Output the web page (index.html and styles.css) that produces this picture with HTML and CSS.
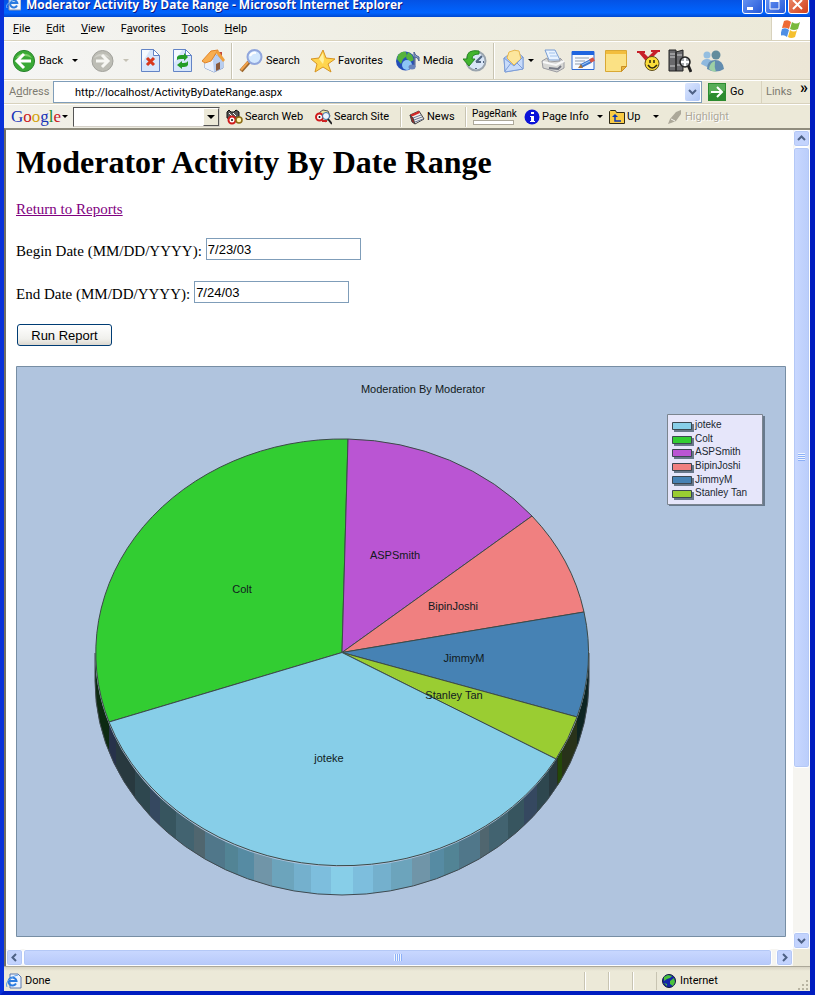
FILE: index.html
```html
<!DOCTYPE html>
<html lang="en">
<head>
<meta charset="utf-8">
<title>Moderator Activity By Date Range - Microsoft Internet Explorer</title>
<link rel="stylesheet" href="styles.css">
</head>
<body>
<div class="window">
  <header class="titlebar">
    <svg class="title-icon" width="15" height="15" viewBox="0 0 15 15"><path d="M3 0h9l3 3v11H3z" fill="#f4f7fc" stroke="#8a96b0"/><path d="M11 9.5A3.6 3.6 0 1 1 11.3 7H4.5" fill="none" stroke="#2b7be0" stroke-width="2"/><path d="M1 12Q-1 9 5 5t8-3" fill="none" stroke="#7ab4f5"/></svg>
    <span class="title-text">Moderator Activity By Date Range - Microsoft Internet Explorer</span>
    <button class="win-btn" aria-label="Minimize"><svg width="17" height="18" viewBox="0 0 17 18"><path d="M4 12h6v3H4z" fill="#fff"/></svg></button>
    <button class="win-btn" aria-label="Maximize"><svg width="17" height="18" viewBox="0 0 17 18"><path d="M4 5h9v9H4z" fill="none" stroke="#fff"/><path d="M4 6h9" stroke="#fff" stroke-width="2"/></svg></button>
    <button class="win-btn win-close" aria-label="Close"><svg width="17" height="18" viewBox="0 0 17 18"><path d="M4 5l9 9M13 5l-9 9" stroke="#fff" stroke-width="2"/></svg></button>
  </header>

  <nav class="menubar">
    <button><u>F</u>ile</button><button><u>E</u>dit</button><button><u>V</u>iew</button><button>F<u>a</u>vorites</button><button><u>T</u>ools</button><button><u>H</u>elp</button>
    <div class="throbber"><svg width="20" height="18" viewBox="0 0 20 18"><path d="M3 1q4-2 7 1L8 9Q5 7 1 8z" fill="#ee6a35"/><path d="M11 2q4 3 8 0l-2 7q-4 2-8 0z" fill="#79b93c"/><path d="M1 9q4-2 7 1l-2 7Q3 14-1 16z" fill="#4f8fe6"/><path d="M9 10q4 3 7 0l-2 7q-4 2-7 0z" fill="#f5c02e"/></svg></div>
  </nav>

  <div class="toolbar">
    <button class="tool"><svg width="24" height="24" viewBox="0 0 24 24"><circle cx="12" cy="12" r="10.6" fill="#39a935" stroke="#2b8430"/><path d="M4 9a9 8 0 0 1 16 0q-8-4-16 0z" fill="#7fd06d"/><path d="M12 5l-7 7 7 7M6 12h13" fill="none" stroke="#fff" stroke-width="3"/></svg>Back</button>
    <button class="drop" aria-label="Back history"></button>
    <button class="tool" aria-label="Forward"><svg width="24" height="24" viewBox="0 0 24 24"><circle cx="12.500" cy="12" r="10.500" fill="#bdbdb5" stroke="#a2a29c"/><path d="M4 9a9 8 0 0 1 16 0q-8-4-16 0z" fill="#d0d0c9"/><path d="M12 6l6 6-6 6M6 12h12" fill="none" stroke="#f7f7f3" stroke-width="3"/></svg></button>
    <button class="drop drop-off" aria-label="Forward history"></button>
    <button class="tool" aria-label="Stop"><svg width="24" height="24" viewBox="0 0 24 24"><path d="M2.500.5h12l6 6v16h-18z" fill="#d7e6fb" stroke="#6384c6"/><path d="M3 1h8L3 14z" fill="#f5f9ff"/><path d="M14.500.5v6h6z" fill="#fff" stroke="#6384c6"/><path d="M8 9l7 7M15 9l-7 7" stroke="#d8371b" stroke-width="3"/></svg></button>
    <button class="tool" aria-label="Refresh"><svg width="24" height="24" viewBox="0 0 24 24"><path d="M2.500.5h12l6 6v16h-18z" fill="#d7e6fb" stroke="#6384c6"/><path d="M3 1h8L3 14z" fill="#f5f9ff"/><path d="M14.500.5v6h6z" fill="#fff" stroke="#6384c6"/><path d="M6 11V8q1-2 4-2h3V4l4 4-4 4v-2h-3q-3 0-4 1z" fill="#249c27"/><path d="M17 12v4q-1 2-4 2h-2v2l-5-4 5-4v2h2q3 0 4-2z" fill="#249c27"/></svg></button>
    <button class="tool" aria-label="Home"><svg width="24" height="24" viewBox="0 0 24 24"><path d="M16 3h4v6l-4-3z" fill="#c0493e"/><path d="M3 12v7l9 4 9-4v-8l-8-6z" fill="#b9ceef" stroke="#7893c6"/><path d="M3 12v7l9 4V11z" fill="#eaf1fc"/><path d="M11 12l4-6 7 7-1 6-9 4z" fill="#b9ceef"/><path d="M0 12L9 2l7-1-7 11-3 1-3 1z" fill="#f8ae50" stroke="#e18428"/><path d="M16 1l7 10-2 2-7-9z" fill="#f0a03c"/><path d="M14 15l4-2v7l-4 2z" fill="#8b5b3c"/></svg></button>
    <span class="sep"></span>
    <button class="tool"><svg width="24" height="24" viewBox="0 0 24 24"><path d="M10 13l-8 9" stroke="#9a662e" stroke-width="4"/><path d="M9 13l-7 8" stroke="#f2a14a" stroke-width="2"/><circle cx="15.500" cy="8" r="7" fill="#d3e8fe" stroke="#91a6dc" stroke-width="2"/><path d="M11 7q2-4 6-3" fill="none" stroke="#fff" stroke-width="2"/></svg>Search</button>
    <button class="tool"><svg width="24" height="24" viewBox="0 0 24 24"><path d="M12 1l3 8 9 1-7 5 3 8-8-5-8 5 2-8-6-5 8-1z" fill="#ffd54d" stroke="#d79422"/><path d="M12 4l1 7-1 4-4-5z" fill="#fff1a0"/></svg>Favorites</button>
    <button class="tool"><svg width="24" height="24" viewBox="0 0 24 24"><circle cx="9.500" cy="12" r="9.500" fill="#234db9"/><path d="M2 6q4-5 8-3l1 4-4 3-2 5-4-5zM12 3l4 3 2 5-4 2-4-4z" fill="#55b33c"/><circle cx="11" cy="16" r="5" fill="#8cc4f5"/><path d="M18 18V3q1 4 5 5v4q-1-4-4-4v10" fill="#8ba0d0" stroke="#4a5f8f"/><ellipse cx="16" cy="18" rx="3.500" ry="2.500" fill="#6783bd"/></svg>Media</button>
    <button class="tool" aria-label="History"><svg width="24" height="24" viewBox="0 0 24 24"><circle cx="13" cy="12" r="9.500" fill="#d9e6f7" stroke="#9aa4ad" stroke-width="2"/><path d="M13 13l6-6M13 13h5M13 4v1M13 19v1M20 13h1" stroke="#536783" stroke-width="2"/><path d="M16 2Q3 0 4 10H0l6 7 6-7H9q0-5 7-5z" fill="#42b52e" stroke="#268522"/></svg></button>
    <span class="sep"></span>
    <button class="tool" aria-label="Mail"><svg width="24" height="24" viewBox="0 0 24 24"><path d="M2 9L13 1l8 7v12L3 23z" fill="#a9c4f3" stroke="#7d9dd7"/><path d="M5 9l2-6q6-3 10-1l2 8-7 6z" fill="#fce69d" stroke="#e9b94f"/><path d="M2 9l10 8 9-9v12L3 23z" fill="#c8dbfa" stroke="#7d9dd7"/><path d="M3 22l6-8M21 20l-6-6" stroke="#7d9dd7"/></svg></button>
    <button class="drop" aria-label="Mail options"></button>
    <button class="tool" aria-label="Print"><svg width="24" height="24" viewBox="0 0 24 24"><path d="M4 1h10l5 10H8z" fill="#e9f3ff" stroke="#789cd2"/><path d="M8 4h6M9 7h7" stroke="#a3c3ec"/><path d="M1 12l5-3 2 4 11-1v-3l4 4v6l-7 4-14-4z" fill="#d7d7d5" stroke="#9a9ba1"/><path d="M2 13l13 3 8-4" fill="none" stroke="#f8f8f8" stroke-width="2"/><path d="M8 19l9 1 3-3" fill="none" stroke="#747884" stroke-width="2"/></svg></button>
    <button class="tool" aria-label="Edit"><svg width="24" height="24" viewBox="0 0 24 24"><path d="M1 2.500h22v18H1z" fill="#f6faff" stroke="#2e6bd5"/><path d="M1 2h22v4H1z" fill="#1e65e0"/><path d="M4 9h14M4 12h10M4 15h6" stroke="#8d9bad"/><path d="M10 17L20 12" stroke="#3b78cf" stroke-width="4"/><path d="M11 16L19 12" stroke="#a9ccf7"/><path d="M19 12l4-2" stroke="#d45445" stroke-width="4"/><path d="M7 19l3-4 2 4z" fill="#a8733d"/></svg></button>
    <button class="tool" aria-label="Note"><svg width="24" height="24" viewBox="0 0 24 24"><path d="M.5 1.500h21v16l-5 5H.5z" fill="#fbe184" stroke="#d9a834"/><path d="M1 2h20v3H1z" fill="#f2bd3d"/><path d="M16.500 22.500v-5h5z" fill="#eab63d" stroke="#c98f26"/></svg></button>
    <button class="tool" aria-label="Messenger"><svg width="24" height="24" viewBox="0 0 24 24"><path d="M1 2h8v2H8l4 4 5-5h-2V1h9v2h-2l-8 8v6H9v-6L3 4H1z" fill="#c71f28"/><circle cx="16" cy="14.500" r="7" fill="#f9dc3a" stroke="#5c4b18"/><path d="M14 11v3M18 11v3M12 16q4 6 9 0" fill="none" stroke="#2b250f" stroke-width="1.500"/></svg></button>
    <button class="tool" aria-label="Research"><svg width="24" height="24" viewBox="0 0 24 24"><path d="M1 1h7v21H1zM8 3l7-2v21H8z" fill="#69696c" stroke="#222"/><path d="M2 5h5M2 8h5M2 17h5M9 6h5M9 16h5" stroke="#d0d0d0"/><path d="M20 16l3 7" stroke="#222" stroke-width="3"/><circle cx="17" cy="13" r="5" fill="#a9adb0" stroke="#222" stroke-width="1.500"/><path d="M17 9v8M13 13h8" stroke="#fff" stroke-width="2"/></svg></button>
    <button class="tool" aria-label="Contacts"><svg width="24" height="24" viewBox="0 0 24 24"><circle cx="7" cy="6" r="3.500" fill="#94bee0"/><path d="M1 15q1-5 6-5t5 5l-5 3z" fill="#8eb8de"/><circle cx="16" cy="6" r="4.500" fill="#638d9d"/><path d="M7 20q0-9 8-9t9 9q-8 5-17 0z" fill="#628caf"/><path d="M9 20q1-7 6-8-1 6 1 11-4 0-7-3z" fill="#9ed0a5"/></svg></button>
  </div>

  <div class="addressbar">
    <label for="address">A<u>d</u>dress</label>
    <div class="address-box">
      <input id="address" type="text" value="http://localhost/ActivityByDateRange.aspx">
      <button class="xp-arrow" aria-label="Show addresses"><svg width="9" height="7" viewBox="0 0 9 7"><path d="M1 1l3.500 3.500L8 1" fill="none" stroke="#4d6185" stroke-width="2"/></svg></button>
    </div>
    <button class="go"><svg width="18" height="18" viewBox="0 0 18 18"><path d="M0 0h18v18H0z" fill="#2c8b2f"/><path d="M1 1h16v7Q8 6 1 12z" fill="#58ad57"/><path d="M9 4l5 5-5 5M3 9h11" fill="none" stroke="#fff" stroke-width="2"/></svg>Go</button>
    <div class="links">Links<span>»</span></div>
  </div>

  <div class="googlebar">
    <a class="google" href="#"><span class="g-blue">G</span><span class="g-red">o</span><span class="g-gold">o</span><span class="g-blue">g</span><span class="g-green">l</span><span class="g-red">e</span></a>
    <button class="drop" aria-label="Google menu"></button>
    <div class="google-box"><input type="text" aria-label="Google search"><button class="drop classic" aria-label="Search history"></button></div>
    <button class="tool"><svg width="17" height="16" viewBox="0 0 17 16"><path d="M1 3l2-2 2 2h3l2-2 3 2v7l-6 1-6-2z" fill="#555" stroke="#111"/><path d="M3 4l3 3M7 4l3 3" stroke="#fff"/><circle cx="6" cy="11" r="3.500" fill="#fff" stroke="#d01c1c" stroke-width="2"/><circle cx="13" cy="11" r="3" fill="#fff3b0" stroke="#8b6d15" stroke-width="1.500"/><circle cx="6" cy="11" r="1" fill="#111"/></svg>Search Web</button>
    <button class="tool"><svg width="17" height="16" viewBox="0 0 17 16"><path d="M5 3l3-2 5 1 2 5-4 6-7-4z" fill="#e9e19b" stroke="#555"/><circle cx="4.500" cy="8" r="3.500" fill="#fff" stroke="#d01c1c" stroke-width="2"/><circle cx="4.500" cy="8" r="1" fill="#111"/><circle cx="11" cy="7" r="3.500" fill="#eef6ff" stroke="#3a70a8"/><path d="M13 10l4 5" stroke="#222" stroke-width="2"/><path d="M7 12h5" stroke="#c22" stroke-width="2"/></svg>Search Site</button>
    <span class="sep"></span>
    <button class="tool"><svg width="16" height="16" viewBox="0 0 16 16"><path d="M1 6l9-4 5 8-9 5z" fill="#f4f1e9" stroke="#444"/><path d="M1 6l9-4 1 2-9 4z" fill="#d32828"/><path d="M4 9l8-3M5 11l8-3M6 13l8-3" stroke="#69799b"/><path d="M1 6l2 7 3 2-2-6z" fill="#a22" stroke="#444"/></svg>News</button>
    <span class="sep"></span>
    <div class="pagerank"><span>PageRank</span><i></i></div>
    <button class="tool"><svg width="16" height="16" viewBox="0 0 16 16"><circle cx="8" cy="8" r="7.500" fill="#0b12d8"/><path d="M7 3h3v2H7zM6 7h4v5h1v1H6v-1h1V8H6z" fill="#fff"/></svg>Page Info</button>
    <button class="drop" aria-label="Page info menu"></button>
    <button class="tool"><svg width="16" height="16" viewBox="0 0 16 16"><path d="M.5 14.500v-12l1-1h5l1 2h8v11z" fill="#f9cb45" stroke="#2e2a18"/><path d="M12 12H6V7" fill="none" stroke="#0b36b0" stroke-width="1.500"/><path d="M3 8l3-3 3 3z" fill="#0b36b0"/></svg>Up</button>
    <button class="drop" aria-label="Up menu"></button>
    <button class="tool disabled" disabled><svg width="16" height="16" viewBox="0 0 16 16"><path d="M1 15l2-5 6-7 5-2v4l-5 7-5 2z" fill="#aca899"/><path d="M4 10l4 2" stroke="#f7f5ec"/></svg>Highlight</button>
  </div>

  <main class="viewport">
    <div class="page">
      <h1>Moderator Activity By Date Range</h1>
      <a class="return" href="#">Return to Reports</a>
      <form class="report-form">
        <div class="field"><label for="begin">Begin Date (MM/DD/YYYY):</label><input id="begin" type="text" value="7/23/03"></div>
        <div class="field"><label for="end">End Date (MM/DD/YYYY):</label><input id="end" type="text" value="7/24/03"></div>
        <button class="run" type="button">Run Report</button>
      </form>
      <svg class="chart" viewBox="0 0 770 571" role="img" aria-label="Moderation By Moderator">
        <defs><clipPath id="side"><path d="M79 287A247 214 0 0 0 573 287V315A247 214 0 0 1 79 315Z"/></clipPath></defs>
        <path d="M.5.5h769v570H.5z" fill="#b0c4de" stroke="#778ea4"/>
        <g clip-path="url(#side)">
          <path d="M79 280h14v260H79z" fill="#0d2a12"/>
          <path d="M93 280h7v260h-7z" fill="#27324a"/><path d="M100 280h19v260h-19z" fill="#28393f"/>
          <path d="M119 280h15v260h-15z" fill="#2e474f"/><path d="M134 280h10v260h-10z" fill="#354860"/>
          <path d="M144 280h16v260h-16z" fill="#37555f"/><path d="M160 280h18v260h-18z" fill="#426370"/>
          <path d="M178 280h11v260h-11z" fill="#50666f"/><path d="M189 280h20v260h-20z" fill="#50778a"/>
          <path d="M209 280h13v260h-13z" fill="#528495"/><path d="M222 280h16v260h-16z" fill="#568ba3"/>
          <path d="M238 280h18v260h-18z" fill="#7095a8"/><path d="M256 280h22v260h-22z" fill="#6ca4bc"/>
          <path d="M278 280h17v260h-17z" fill="#74b0cd"/><path d="M295 280h20v260h-20z" fill="#7dbedd"/>
          <path d="M315 280h22v260h-22z" fill="#87cee8"/><path d="M337 280h20v260h-20z" fill="#7dbedd"/>
          <path d="M357 280h18v260h-18z" fill="#74b0cd"/><path d="M375 280h21v260h-21z" fill="#6ca4bc"/>
          <path d="M396 280h18v260h-18z" fill="#7095a8"/><path d="M414 280h14v260h-14z" fill="#568ba3"/>
          <path d="M428 280h15v260h-15z" fill="#528495"/><path d="M443 280h21v260h-21z" fill="#50778a"/>
          <path d="M464 280h9v260h-9z" fill="#50666f"/><path d="M473 280h19v260h-19z" fill="#426370"/>
          <path d="M492 280h16v260h-16z" fill="#37555f"/><path d="M508 280h13v260h-13z" fill="#354860"/>
          <path d="M521 280h12v260h-12z" fill="#2e474f"/><path d="M533 280h8v260h-8z" fill="#28393f"/>
          <path d="M541 280h20v260h-20z" fill="#28321a"/><path d="M542 280h4v260h-4z" fill="#244808"/>
          <path d="M561 280h12v260h-12z" fill="#0d2422"/>
        </g>
        <path d="M79 287V315A247 214 0 0 0 573 315V287" fill="none" stroke="#404a50"/>
        <g stroke="#3c4a48" stroke-linejoin="round">
          <path d="M326 286.500L93 356A247 214 0 0 1 332 73Z" fill="#32cd32"/>
          <path d="M326 286.500L332 73A247 214 0 0 1 516 150Z" fill="#ba55d3"/>
          <path d="M326 286.500L516 150A247 214 0 0 1 568 246Z" fill="#f08080"/>
          <path d="M326 286.500L568 246A247 214 0 0 1 561 351Z" fill="#4682b4"/>
          <path d="M326 286.500L561 351A247 214 0 0 1 540 393Z" fill="#9acd32"/>
          <path d="M326 286.500L540 393A247 214 0 0 1 93 356Z" fill="#87cee8"/>
        </g>
        <g class="chart-text" text-anchor="middle">
          <text x="407" y="27">Moderation By Moderator</text>
          <text x="226" y="227">Colt</text><text x="379" y="193">ASPSmith</text>
          <text x="437" y="244">BipinJoshi</text><text x="448" y="296">JimmyM</text>
          <text x="438" y="333">Stanley Tan</text><text x="313" y="396">joteke</text>
        </g>
        <path d="M653 50h96v90h-96z" fill="#68798c"/>
        <path d="M651.500 48.500h95v90h-95z" fill="#e6e6fa" stroke="#7b858f"/>
        <g fill="#68788a"><path d="M658 58h20v8h-20zM658 72h20v8h-20zM658 85h20v8h-20zM658 99h20v8h-20zM658 112h20v8h-20zM658 126h20v8h-20z"/></g>
        <g stroke="#3b4750">
          <path d="M656.500 56.500h19v7h-19z" fill="#87cee8"/><path d="M656.500 70.500h19v7h-19z" fill="#32cd32"/>
          <path d="M656.500 83.500h19v7h-19z" fill="#ba55d3"/><path d="M656.500 97.500h19v7h-19z" fill="#f08080"/>
          <path d="M656.500 110.500h19v7h-19z" fill="#4682b4"/><path d="M656.500 124.500h19v7h-19z" fill="#9acd32"/>
        </g>
        <g class="legend-text">
          <text x="679" y="62">joteke</text><text x="679" y="76">Colt</text><text x="679" y="89">ASPSmith</text>
          <text x="679" y="103">BipinJoshi</text><text x="679" y="117">JimmyM</text><text x="679" y="130">Stanley Tan</text>
        </g>
      </svg>
    </div>
    <div class="scroll scroll-v">
      <button aria-label="Scroll up"><svg width="9" height="9" viewBox="0 0 9 9"><path d="M1 6l3.500-3.500L8 6" fill="none" stroke="#4d6185" stroke-width="2"/></svg></button>
      <div class="thumb"><i></i></div><div class="track"></div>
      <button aria-label="Scroll down"><svg width="9" height="9" viewBox="0 0 9 9"><path d="M1 3l3.500 3.500L8 3" fill="none" stroke="#4d6185" stroke-width="2"/></svg></button>
    </div>
    <div class="scroll scroll-h">
      <button aria-label="Scroll left"><svg width="9" height="9" viewBox="0 0 9 9"><path d="M6 1L2.500 4.500 6 8" fill="none" stroke="#4d6185" stroke-width="2"/></svg></button>
      <div class="thumb"><i></i></div><div class="track"></div>
      <button aria-label="Scroll right"><svg width="9" height="9" viewBox="0 0 9 9"><path d="M3 1l3.500 3.500L3 8" fill="none" stroke="#4d6185" stroke-width="2"/></svg></button>
    </div>
  </main>

  <footer class="statusbar">
    <div class="status-main"><svg width="16" height="16" viewBox="0 0 16 16"><path d="M4 1h8l3 3v11H4z" fill="#edf3fd" stroke="#5a79ae"/><path d="M10 10.500A4 4 0 1 1 10.500 8H3" fill="none" stroke="#2b7be0" stroke-width="2"/><path d="M1 14Q-1 10 4 6t8-4" fill="none" stroke="#5ba0ea"/></svg>Done</div>
    <span class="cell"></span><span class="cell"></span><span class="cell"></span>
    <div class="zone"><svg width="14" height="14" viewBox="0 0 14 14"><circle cx="7" cy="7" r="6.500" fill="#1525a8" stroke="#101a38"/><path d="M2 3l4-2 4 1-2 2-3 1-3 2zM8 7l4-3 1 4-2 4-3-2zM2 9l3 1v2z" fill="#4bc23a"/></svg>Internet</div>
    <svg class="grip" width="12" height="12" viewBox="0 0 12 12"><path d="M9 1h2v2H9zM5 5h2v2H5zM9 5h2v2H9zM1 9h2v2H1zM5 9h2v2H5zM9 9h2v2H9z" fill="#b8b4a2"/></svg>
  </footer>
</div>
</body>
</html>
```
FILE: styles.css
```css
* { box-sizing: border-box; }
body { margin: 0; background: #0a46dc; }
button, input { font: inherit; color: inherit; margin: 0; padding: 0; border: 0; background: none; border-radius: 0; outline: 0; }
svg { display: block; flex: none; }

.window {
  display: flex; flex-direction: column; height: 100vh;
  border: solid; border-width: 0 5px 4px 4px;
  border-color: #0831d9 #001dc0 #001dc0 #0831d9;
  background: #ece9d8; color: #000;
  font: 11px/14px Roboto, "Liberation Sans", sans-serif;
}

.titlebar {
  flex: none; display: flex; align-items: flex-end; gap: 2px; height: 17px;
  padding: 0 1px 3px 2px; overflow: hidden;
  background: linear-gradient(#0452e4, #0064ff 75%, #0048d0);
}
.title-text { flex: 1; padding: 0 0 2px 3px; color: #fff; font: bold 12px/14px "Open Sans", "Noto Sans", sans-serif; text-shadow: 1px 1px #0a1883; white-space: nowrap; }
.win-btn { flex: none; width: 21px; height: 21px; border: 1px solid #fff; border-radius: 3px; background: linear-gradient(135deg, #6f9cf5, #2558d8); }
.win-close { background: linear-gradient(135deg, #ee8f70, #d0401c); }
.title-icon { margin-bottom: 3px; }

.menubar { flex: none; display: flex; gap: 16px; height: 24px; padding-left: 9px; background: linear-gradient(90deg, #f4f4f2, #efeee2 50%, #ece9d8); border-bottom: 1px solid #d8d2bd; }
.menubar button { height: 24px; }
.throbber { margin-left: auto; width: 39px; display: grid; place-items: center; background: #fff; border-left: 1px solid #d8d2bd; }

.toolbar {
  flex: none; display: grid; align-items: center; height: 39px; padding-left: 8px;
  grid-template-columns: 58px 20px 31px 18px 32px 31px 29px 8px 72px 85px 67px 30px 9px 24px 15px 30px 34px 31px 32px 32px 1fr;
  background: linear-gradient(90deg, #f5f5f4, #efeee4 50%, #ece6d6);
  border-top: 1px solid #fff; border-bottom: 1px solid #d8d2bd;
}
.tool { display: flex; align-items: center; gap: 3px; white-space: nowrap; }
.drop { display: flex; align-items: center; width: 10px; height: 16px; }
.drop::before { content: ""; margin-left: 2px; border: solid transparent; border-width: 3px 3px 0; border-top-color: #000; }
.drop-off::before { border-top-color: #c5c2b5; }
.sep { width: 2px; height: 36px; border-left: 1px solid #c8c4b2; border-right: 1px solid #fff; }

.addressbar { flex: none; display: flex; align-items: center; height: 24px; padding-left: 5px; border-top: 1px solid #fff; border-bottom: 1px solid #d8d2bd; background: linear-gradient(90deg, #f2f1ea, #ece9d8 30%); }
.addressbar label { width: 44px; color: #7d7b70; }
.address-box { flex: 1; display: flex; height: 22px; padding: 1px; background: #fff; border: 1px solid #7f9db9; }
.address-box input { flex: 1; min-width: 0; padding: 2px 0 0 20px; }
.xp-arrow { display: grid; place-items: center; width: 15px; border-radius: 2px; background: linear-gradient(135deg, #dbe6ff, #aec5f5); }
.go { display: flex; align-items: center; gap: 4px; width: 53px; margin-left: 6px; }
.links { display: flex; align-self: stretch; align-items: center; gap: 8px; width: 49px; padding-left: 4px; color: #7d7b70; border-left: 1px solid #d8d2bd; }
.links span { color: #000; font-size: 16px; font-weight: bold; line-height: 14px; padding-bottom: 8px; }

.googlebar {
  flex: none; display: grid; align-items: center; height: 24px; padding-left: 7px;
  grid-template-columns: 49px 13px 153px 89px 85px 9px 56px 7px 52px 71px 14px 42px 16px 1fr;
  border-top: 1px solid #fff; background: linear-gradient(90deg, #f2f1ea, #ece9d8 30%);
}
.googlebar .tool { gap: 2px; }
.googlebar .sep { height: 20px; }
.google { font: 17px/20px "Liberation Serif", serif; text-decoration: none; }
.g-blue { color: #1734b8; } .g-red { color: #c81722; } .g-gold { color: #d3a20c; } .g-green { color: #1f8a2b; }
.google-box { display: flex; width: 147px; height: 20px; border: 1px solid; border-color: #555 #d4d0c8 #d4d0c8 #555; background: #fff; }
.google-box input { flex: 1; min-width: 0; }
.classic { width: 16px; height: 18px; padding-left: 2px; border: 1px solid; border-color: #fff #555 #555 #fff; background: #ece9d8; }
.classic::before { border-width: 4px 4px 0; margin-left: 1px; }
.pagerank { font-size: 10px; line-height: 11px; }
.pagerank span { display: block; }
.pagerank i { display: block; width: 41px; height: 5px; margin: 1px; border: 1px solid #aca899; background: #fff; }
.disabled { color: #aca899; text-shadow: 1px 1px #fff; }

.viewport {
  flex: 1; min-height: 0; display: grid; grid-template-columns: minmax(0, 1fr) 17px; grid-template-rows: minmax(0, 1fr) 17px;
  border: solid #716f64; border-width: 2px 0 0 2px; border-top-color: #8f8c7d;
}
.page { display: flex; flex-direction: column; align-items: flex-start; gap: 20px; padding: 14px 7px 0 10px; overflow: hidden; background: #fff; font: 15px/18px "Liberation Serif", "Times New Roman", serif; }
.page h1 { margin: 0; font-size: 32px; line-height: 36px; }
.return { color: #800080; }
.report-form { display: flex; flex-direction: column; align-items: flex-start; gap: 20px; }
.field { display: flex; align-items: flex-end; gap: 4px; height: 23px; padding-bottom: 1px; }
.field input { width: 155px; height: 22px; padding: 0 1px; border: 1px solid #7f9db9; background: #fff; font: 13px "Liberation Sans", Arial, sans-serif; }
.run { width: 95px; height: 22px; margin-left: 1px; border: 1px solid #003c74; border-radius: 3px; background: linear-gradient(#fff, #f0f0ec 70%, #dcd8d0); font: 13px "Liberation Sans", Arial, sans-serif; }
.chart { width: 100%; height: auto; }
.chart-text { font: 11px "Liberation Sans", Arial, sans-serif; fill: #111a20; }
.legend-text { font: 10px "Liberation Sans", Arial, sans-serif; fill: #202630; }

.scroll { display: flex; background: #f6f5f1; }
.scroll-v { flex-direction: column; }
.scroll-h { grid-column: 1; }
.scroll button, .thumb { border: 1px solid #fff; border-radius: 3px; background: #c3d3fd; box-shadow: inset 0 0 0 1px #b4c8f6; }
.scroll button { flex: none; display: grid; place-items: center; width: 17px; height: 17px; }
.thumb { display: grid; place-items: center; }
.scroll-v .thumb { flex: 79; background: linear-gradient(90deg, #c9d8ff, #bacdfb); }
.scroll-v .track { flex: 21; }
.scroll-h .thumb { flex: 995; background: linear-gradient(#c9d8ff, #b7c9fa); }
.scroll-h .track { flex: 5; }
.scroll-v i { width: 7px; height: 8px; background: repeating-linear-gradient(#eef4fe 0 1px, #8cb0f8 1px 2px); }
.scroll-h i { width: 8px; height: 7px; background: repeating-linear-gradient(90deg, #eef4fe 0 1px, #8cb0f8 1px 2px); }

.statusbar { flex: none; display: flex; align-items: center; height: 25px; padding: 3px 1px 0 2px; border-top: 1px solid #aca899; background: linear-gradient(#d8d4c4, #ece9d8 4px); }
.status-main { flex: 1; display: flex; align-items: center; gap: 3px; }
.cell { width: 24px; height: 18px; border-left: 1px solid #c8c4b2; box-shadow: inset 1px 0 #fff; }
.zone { display: flex; align-items: center; gap: 4px; width: 141px; height: 18px; padding-left: 5px; border-left: 1px solid #c8c4b2; }
.grip { align-self: flex-end; }
```
